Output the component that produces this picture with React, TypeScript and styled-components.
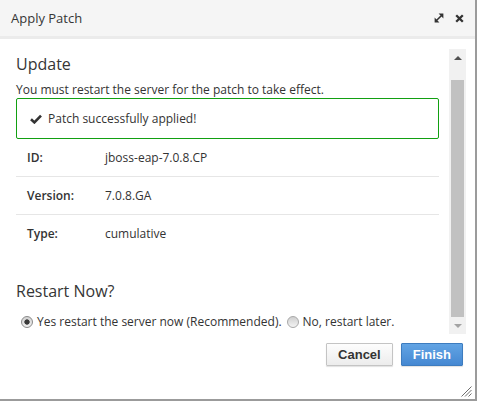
import React, {useLayoutEffect, useRef} from 'react';
import styled, {createGlobalStyle} from 'styled-components';

const GlobalStyle = createGlobalStyle`
	html, body {
		margin: 0;
		padding: 0;
		background: #ffffff;
	}
	body {
		font-family: "Open Sans", "DejaVu Sans", sans-serif;
		color: #333333;
	}
`;

const Dialog = styled.div`
	position: relative;
	width: 477px;
	height: 401px;
	box-sizing: border-box;
	border-right: 2px solid #9b9b9b;
	border-bottom: 2px solid #9b9b9b;
	display: flex;
	flex-direction: column;
	background: #ffffff;
`;

const Header = styled.div`
	height: 36px;
	flex-shrink: 0;
	background: #f5f5f5;
	border-bottom: 3px solid #ebebeb;
	display: flex;
	align-items: center;
	padding: 0 11px;
`;

const Title = styled.div`
	flex: 1;
	font-size: 13px;
	color: #363636;
`;

const HeaderTools = styled.div`
	display: flex;
	align-items: center;
	gap: 11px;
`;

const Body = styled.div`
	flex: 1;
	padding-top: 10px;
	display: flex;
	flex-direction: column;
`;

const ScrollPane = styled.div`
	height: 285px;
	width: 466px;
	display: flex;
`;

const ScrollArea = styled.div`
	flex: 1;
	box-sizing: border-box;
	overflow-y: scroll;
	scrollbar-width: none;
	padding: 0 10px 0 16px;

	&::-webkit-scrollbar {
		display: none;
	}
`;

const Scrollbar = styled.div`
	width: 17px;
	flex-shrink: 0;
	background: #f1f1f1;
	display: flex;
	flex-direction: column;
`;

const ArrowButton = styled.div<{ $down?: boolean; $disabled?: boolean }>`
	height: 17px;
	flex-shrink: 0;
	display: flex;
	align-items: center;
	justify-content: center;

	&::before {
		content: "";
		width: 0;
		height: 0;
		border-left: 4px solid transparent;
		border-right: 4px solid transparent;
		${p => (p.$down
		? `border-top: 4px solid ${p.$disabled ? '#a3a3a3' : '#505050'};`
		: `border-bottom: 4px solid ${p.$disabled ? '#a3a3a3' : '#505050'};`)}
	}
`;

const Track = styled.div`
	flex: 1;
	display: flex;
	flex-direction: column;
	padding: 14px 2px 0;
`;

const Thumb = styled.div`
	flex: 1;
	background: #c1c1c1;
`;

const Content = styled.div`
	padding: 21px 0 4px;
`;

const Heading = styled.h3<{ $gap?: number }>`
	margin: ${p => p.$gap ?? 0}px 0 0;
	font-size: 16px;
	line-height: 20px;
	font-weight: 400;
	color: #363636;
`;

const Lead = styled.p`
	margin: 7px 0 0;
	font-size: 12px;
	line-height: 17px;
`;

const Alert = styled.div`
	height: 41px;
	box-sizing: border-box;
	border: 1px solid #12a012;
	border-radius: 2px;
	display: flex;
	align-items: center;
	gap: 6px;
	padding: 0 13px;
	font-size: 12px;
`;

const Row = styled.div<{ $last?: boolean }>`
	height: 37px;
	display: flex;
	align-items: center;
	padding-left: 11px;
	font-size: 12px;
	border-bottom: ${p => (p.$last ? 'none' : '1px solid #e6e6e6')};
`;

const Label = styled.span`
	width: 78px;
	font-weight: 600;
`;

const Value = styled.span``;

const RadioLine = styled.div`
	margin-top: 13px;
	padding-left: 5px;
	display: flex;
	align-items: center;
	font-size: 12px;
	line-height: 16px;
`;

const RadioLabel = styled.label`
	display: flex;
	align-items: center;
	gap: 4px;
	margin-right: 5px;
`;

const Radio = styled.input.attrs({type: 'radio'})`
	appearance: none;
	margin: 0;
	width: 12px;
	height: 12px;
	border-radius: 50%;
	box-sizing: border-box;
	border: 1px solid #a8a8a8;
	background: linear-gradient(#cfcfcf, #f4f4f4);

	&:checked {
		border-color: #8a8a8a;
		background:
			radial-gradient(circle, #3a3a3a 0 2.3px, transparent 3px),
			linear-gradient(#d2d2d2, #f0f0f0);
	}
`;

const Footer = styled.div`
	display: flex;
	justify-content: flex-end;
	gap: 8px;
	padding: 9px 12px 0 0;
`;

const Button = styled.button<{ $primary?: boolean }>`
	height: 23px;
	padding: 0 11px;
	font-family: "Liberation Sans", Arial, sans-serif;
	font-size: 13px;
	font-weight: 700;
	border-radius: 1px;
	border: 1px solid ${p => (p.$primary ? '#3d7cbf' : '#c4c4c4')};
	color: ${p => (p.$primary ? '#ffffff' : '#333333')};
	background: ${p => (p.$primary
		? 'linear-gradient(#62a4e4, #4588d2)'
		: 'linear-gradient(#fdfdfd, #ececec)')};
	box-shadow: 0 1px 1px rgba(0, 0, 0, 0.12);
`;

const Grip = styled.div`
	position: absolute;
	right: 3px;
	bottom: 2px;
	width: 11px;
	height: 11px;
	display: flex;
`;

const ExpandIcon = () => (
	<svg width="10" height="10" viewBox="0 0 10 10">
		<line x1="2.2" y1="7.8" x2="7.8" y2="2.2" stroke="#333" strokeWidth="1.6"/>
		<polygon points="4.6,0.6 9.4,0.6 9.4,5.4" fill="#333"/>
		<polygon points="0.6,4.6 0.6,9.4 5.4,9.4" fill="#333"/>
	</svg>
);

const CloseIcon = () => (
	<svg width="9" height="9" viewBox="0 0 9 9">
		<path d="M1.2 1.2 L7.8 7.8 M7.8 1.2 L1.2 7.8" stroke="#333" strokeWidth="2.3" strokeLinecap="butt"/>
	</svg>
);

const CheckIcon = () => (
	<svg width="12" height="10" viewBox="0 0 12 10">
		<path d="M1 5.2 L4.4 8.4 L11 1.6" stroke="#333" strokeWidth="2.6" fill="none"/>
	</svg>
);

const GripIcon = () => (
	<svg width="11" height="11" viewBox="0 0 11 11">
		<path d="M10.5 0.5 L0.5 10.5 M10.5 4 L4 10.5 M10.5 7.5 L7.5 10.5" stroke="#6e6e6e" strokeWidth="1"/>
	</svg>
);

const App = () => {
	const scrollRef = useRef<HTMLDivElement>(null);

	useLayoutEffect(() => {
		const el = scrollRef.current;
		if (el) el.scrollTop = el.scrollHeight;
	}, []);

	return (
		<>
			<GlobalStyle/>
			<Dialog>
				<Header>
					<Title>Apply Patch</Title>
					<HeaderTools>
						<ExpandIcon/>
						<CloseIcon/>
					</HeaderTools>
				</Header>
				<Body>
					<ScrollPane>
						<ScrollArea ref={scrollRef}>
							<Content>
								<Heading>Update</Heading>
								<Lead>You must restart the server for the patch to take effect.</Lead>
								<Alert>
									<CheckIcon/>
									<span>Patch successfully applied!</span>
								</Alert>
								<Row>
									<Label>ID:</Label>
									<Value>jboss-eap-7.0.8.CP</Value>
								</Row>
								<Row>
									<Label>Version:</Label>
									<Value>7.0.8.GA</Value>
								</Row>
								<Row $last>
									<Label>Type:</Label>
									<Value>cumulative</Value>
								</Row>
								<Heading $gap={29}>Restart Now?</Heading>
								<RadioLine>
									<RadioLabel>
										<Radio name="restart" defaultChecked/>
										Yes restart the server now (Recommended).
									</RadioLabel>
									<RadioLabel>
										<Radio name="restart"/>
										No, restart later.
									</RadioLabel>
								</RadioLine>
							</Content>
						</ScrollArea>
						<Scrollbar>
							<ArrowButton/>
							<Track>
								<Thumb/>
							</Track>
							<ArrowButton $down $disabled/>
						</Scrollbar>
					</ScrollPane>
					<Footer>
						<Button>Cancel</Button>
						<Button $primary>Finish</Button>
					</Footer>
				</Body>
				<Grip><GripIcon/></Grip>
			</Dialog>
		</>
	);
};

export default App;
